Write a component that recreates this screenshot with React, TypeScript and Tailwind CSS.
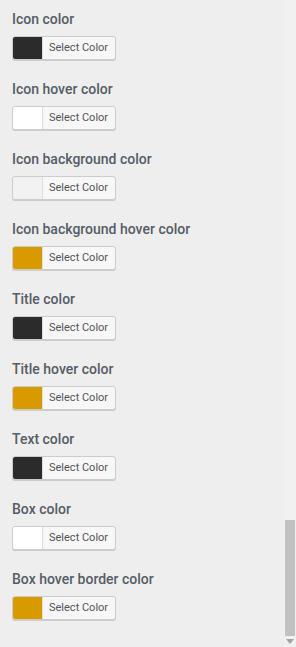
import React from "react";

const fields: { label: string; color: string }[] = [
  { label: "Icon color", color: "#2b2b2b" },
  { label: "Icon hover color", color: "#ffffff" },
  { label: "Icon background color", color: "#f2f2f2" },
  { label: "Icon background hover color", color: "#d99a00" },
  { label: "Title color", color: "#2b2b2b" },
  { label: "Title hover color", color: "#d99a00" },
  { label: "Text color", color: "#2b2b2b" },
  { label: "Box color", color: "#ffffff" },
  { label: "Box hover border color", color: "#d99a00" },
];

function ColorButton({ color }: { color: string }) {
  return (
    <button className="flex h-[24px] w-[104px] items-stretch overflow-hidden rounded-[3px] border border-[#cccccc] bg-[#f7f7f7] shadow-[0_1px_0_#cccccc] p-0">
      {/* swatch colour comes from data */}
      <span className="w-[30px] shrink-0 border-r border-[#dddddd]" style={{ backgroundColor: color }} />
      <span className="flex flex-1 items-center pl-[6px] text-[11px] text-[#555555]">Select Color</span>
    </button>
  );
}

export default function App() {
  return (
    <div className="flex h-[647px] w-[296px] bg-[#eeeeee] font-['Roboto',sans-serif] overflow-hidden">
      <div className="flex flex-1 flex-col pl-[12px] pt-[10px]">
        {fields.map((f) => (
          <div key={f.label} className="flex h-[70px] flex-col">
            <label className="text-[14px] leading-[19px] font-medium text-[#555d66] whitespace-nowrap">{f.label}</label>
            <div className="mt-[7px]">
              <ColorButton color={f.color} />
            </div>
          </div>
        ))}
      </div>

      {/* fake scrollbar */}
      <div className="flex w-[12px] flex-col bg-[#f1f1f1]">
        <div className="flex-1" />
        <div className="mx-[1px] h-[116px] bg-[#c1c1c1]" />
        <div className="flex h-[11px] items-center justify-center">
          <svg width="8" height="5" viewBox="0 0 8 5">
            <path d="M0 0 L8 0 L4 5 Z" fill="#a3a3a3" />
          </svg>
        </div>
      </div>
    </div>
  );
}
